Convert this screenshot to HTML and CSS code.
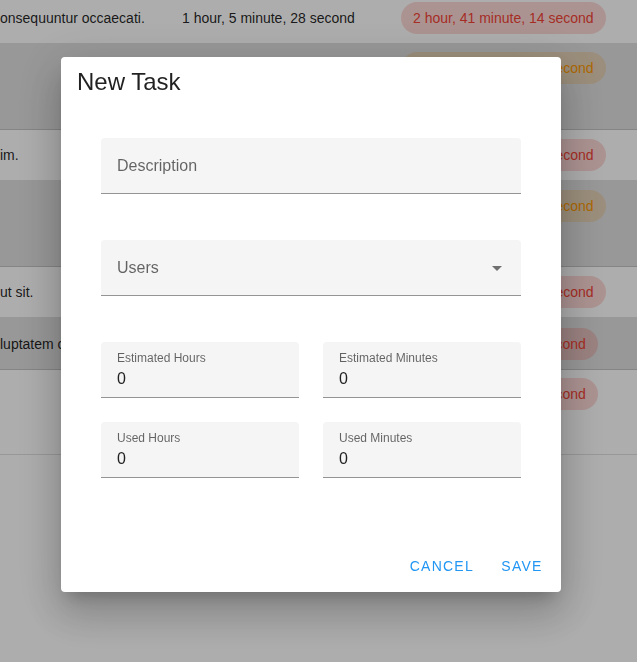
FILE: index.html
```html
<!DOCTYPE html>
<html lang="en">
<head>
<meta charset="utf-8">
<title>New Task</title>
<link rel="stylesheet" href="styles.css">
</head>
<body>
<div class="table">
  <div class="row h44 first">
    <div class="c1">onsequuntur occaecati.</div>
    <div class="c2">1 hour, 5 minute, 28 second</div>
    <div class="c3"><span class="chip red">2 hour, 41 minute, 14 second</span></div>
  </div>
  <div class="row alt h86 p8">
    <div class="c1"></div>
    <div class="c2">0 hour, 35 minute, 12 second</div>
    <div class="c3"><span class="chip orange">1 hour, 58 minute, 40 second</span></div>
  </div>
  <div class="row h51">
    <div class="c1">im.</div>
    <div class="c2">2 hour, 9 minute, 51 second</div>
    <div class="c3"><span class="chip red">3 hour, 12 minute, 27 second</span></div>
  </div>
  <div class="row alt h86">
    <div class="c1"></div>
    <div class="c2">0 hour, 48 minute, 3 second</div>
    <div class="c3"><span class="chip orange">1 hour, 20 minute, 36 second</span></div>
  </div>
  <div class="row h51">
    <div class="c1">ut sit.</div>
    <div class="c2">1 hour, 27 minute, 9 second</div>
    <div class="c3"><span class="chip red">2 hour, 15 minute, 48 second</span></div>
  </div>
  <div class="row alt h52 p10">
    <div class="c1">luptatem consequatur.</div>
    <div class="c2">0 hour, 51 minute, 16 second</div>
    <div class="c3"><span class="chip red">4 hour, 20 minute, 7 second</span></div>
  </div>
  <div class="row h85 p8">
    <div class="c1"></div>
    <div class="c2">1 hour, 3 minute, 44 second</div>
    <div class="c3"><span class="chip red">2 hour, 38 minute, 5 second</span></div>
  </div>
</div>

<div class="overlay"></div>

<div class="dialog">
  <div class="title">New Task</div>
  <div class="form">
    <div class="field big">Description</div>
    <div class="field big select">
      <span>Users</span>
      <svg class="arrow" width="24" height="24" viewBox="0 0 24 24"><path d="M7 10l5 5 5-5z"/></svg>
    </div>
    <div class="grid">
      <div class="field small">
        <div class="lbl">Estimated Hours</div>
        <div class="val">0</div>
      </div>
      <div class="field small">
        <div class="lbl">Estimated Minutes</div>
        <div class="val">0</div>
      </div>
      <div class="field small">
        <div class="lbl">Used Hours</div>
        <div class="val">0</div>
      </div>
      <div class="field small">
        <div class="lbl">Used Minutes</div>
        <div class="val">0</div>
      </div>
    </div>
  </div>
  <div class="actions">
    <button class="btn">Cancel</button>
    <button class="btn">Save</button>
  </div>
</div>
</body>
</html>
```
FILE: styles.css
```css
html, body {
  margin: 0;
  padding: 0;
}

body {
  font-family: "Liberation Sans", Arial, sans-serif;
  background: #ffffff;
  color: rgba(0, 0, 0, 0.87);
  overflow: hidden;
  width: 637px;
  height: 662px;
}

.table {
  width: 637px;
}

.row {
  display: flex;
  align-items: flex-start;
  box-sizing: border-box;
  border-bottom: 1px solid rgba(0, 0, 0, 0.12);
  padding-top: 9px;
  font-size: 14px;
  background: #ffffff;
}

.row.alt {
  background: #e0e0e0;
}

.row.first { padding-top: 2px; }
.row.p8 { padding-top: 8px; }
.row.p10 { padding-top: 10px; }

.h44 { height: 44px; }
.h51 { height: 51px; }
.h52 { height: 52px; }
.h85 { height: 85px; }
.h86 { height: 86px; }

.c1 {
  width: 182px;
  line-height: 32px;
  white-space: nowrap;
  overflow: hidden;
}

.c2 {
  width: 219px;
  line-height: 32px;
  white-space: nowrap;
}

.c3 {
  display: flex;
}

.chip {
  display: inline-flex;
  align-items: center;
  height: 32px;
  padding: 0 12px;
  border-radius: 16px;
  white-space: nowrap;
  font-size: 14px;
}

.chip.red {
  background: rgba(244, 67, 54, 0.2);
  color: #f44336;
}

.chip.orange {
  background: rgba(255, 152, 0, 0.18);
  color: #ff9800;
}

.overlay {
  position: fixed;
  inset: 0;
  background: rgba(0, 0, 0, 0.32);
}

.dialog {
  position: fixed;
  left: 61px;
  top: 57px;
  width: 500px;
  background: #ffffff;
  border-radius: 4px;
  box-shadow: 0 11px 15px -7px rgba(0, 0, 0, 0.2),
              0 24px 38px 3px rgba(0, 0, 0, 0.14),
              0 9px 46px 8px rgba(0, 0, 0, 0.12);
}

.title {
  font-size: 24px;
  line-height: 32px;
  padding: 9px 16px 0;
  color: rgba(0, 0, 0, 0.87);
}

.form {
  padding: 40px 40px 0;
  display: flex;
  flex-direction: column;
}

.field {
  box-sizing: border-box;
  height: 56px;
  background: #f5f5f5;
  border-bottom: 1px solid #949494;
  border-radius: 4px 4px 0 0;
}

.field.big {
  display: flex;
  align-items: center;
  padding: 0 12px 0 16px;
  font-size: 16px;
  color: rgba(0, 0, 0, 0.6);
  margin-bottom: 46px;
}

.arrow {
  margin-left: auto;
  fill: rgba(0, 0, 0, 0.54);
}

.grid {
  display: grid;
  grid-template-columns: 1fr 1fr;
  column-gap: 24px;
  row-gap: 24px;
}

.field.small {
  padding: 9px 16px 0;
}

.lbl {
  font-size: 12px;
  line-height: 14px;
  color: rgba(0, 0, 0, 0.6);
  margin-bottom: 4px;
}

.val {
  font-size: 16px;
  line-height: 20px;
  color: rgba(0, 0, 0, 0.87);
}

.actions {
  display: flex;
  justify-content: flex-end;
  gap: 8px;
  padding: 70px 7px 8px;
}

.btn {
  height: 36px;
  min-width: 64px;
  padding: 0 8px;
  border: 0;
  background: none;
  font-family: "Liberation Sans", Arial, sans-serif;
  font-size: 14px;
  letter-spacing: 1.25px;
  text-transform: uppercase;
  color: #2196f3;
  cursor: pointer;
}
```
